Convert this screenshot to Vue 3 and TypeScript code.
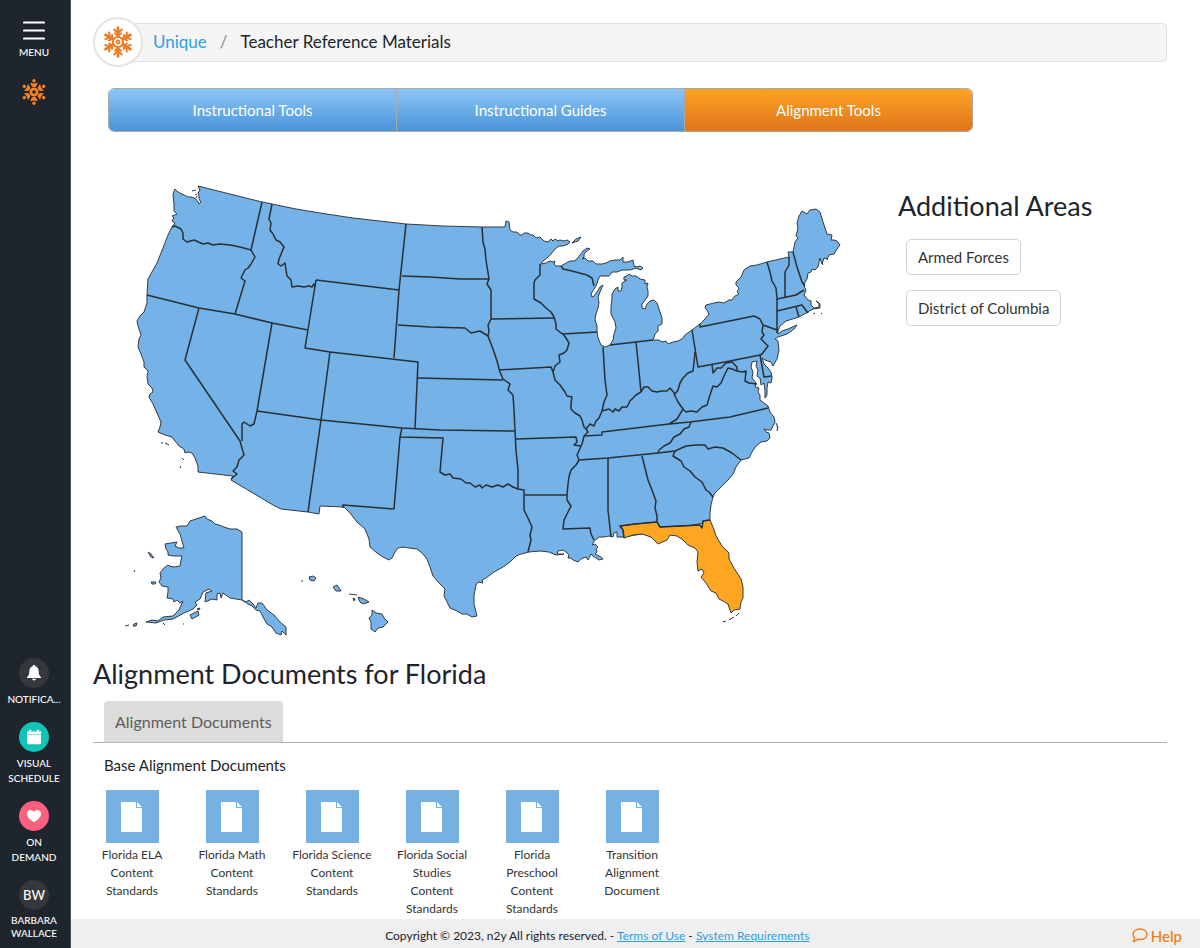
<script setup lang="ts">
import { ref } from 'vue'

interface Doc {
  id: number
  title: string
}

const tabs: string[] = ['Instructional Tools', 'Instructional Guides', 'Alignment Tools']
const activeTab = ref('Alignment Tools')
const areas: string[] = ['Armed Forces', 'District of Columbia']

const documents: Doc[] = [
  { id: 1, title: 'Florida ELA Content Standards' },
  { id: 2, title: 'Florida Math Content Standards' },
  { id: 3, title: 'Florida Science Content Standards' },
  { id: 4, title: 'Florida Social Studies Content Standards' },
  { id: 5, title: 'Florida Preschool Content Standards' },
  { id: 6, title: 'Transition Alignment Document' },
]

const arms: number[] = [0, 60, 120, 180, 240, 300]

// Lower 48 states as one landmass; state lines are drawn over it.
const mainland =
  'M175 189 178 192 182 194 188 197 192 197 196 199 198 202 199 204 201 202 199 199 199 196 198 193 200 190 198 186 230 194 262 202 272 204 296 209 320 213 353 218 406 224 443 226 482 227 505 227 506 221 509 222 510 230 513 232 517 232 520 235 522 235 524 233 528 233 531 235 533 235 536 238 540 237 544 241 548 242 551 239 553 241 555 239 558 241 560 240 564 241 567 240 570 242 568 244 563 246 559 246 555 249 551 254 547 258 543 261 541 264 546 263 550 261 553 262 555 261 554 264 556 266 561 266 566 263 570 261 574 261 577 259 580 255 583 251 587 248 590 249 587 251 584 254 584 257 582 259 585 258 588 261 593 261 596 264 602 264 606 263 610 261 615 260 620 260 623 257 623 262 628 262 633 260 634 266 637 267 640 266 643 268 641 270 636 268 630 270 622 270 617 272 612 272 609 276 605 276 600 276 598 280 596 286 592 292 591 296 593 297 597 292 600 287 603 285 600 292 598 297 599 303 598 308 596 314 595 320 597 326 597 332 598 338 601 345 605 347 610 345 613 340 614 334 616 328 615 322 611 314 611 307 612 298 612 294 615 289 618 287 618 291 621 291 622 287 622 283 625 281 627 280 624 280 624 277 627 276 629 274 632 276 636 276 640 279 645 280 645 284 648 283 647 287 648 291 648 296 645 300 642 304 642 308 645 309 647 304 650 301 654 300 657 303 659 309 662 318 662 324 658 326 658 331 655 334 653 340 659 340 662 342 666 341 668 344 673 342 678 341 682 339 685 335 692 330 700 324 705 319 709 314 707 310 705 308 706 305 714 303 719 302 724 303 729 300 732 300 735 296 739 294 737 292 739 288 736 285 736 282 741 277 744 270 750 266 757 265 767 262 789 257 788 252 793 252 795 242 798 238 796 236 798 228 797 223 799 216 802 211 807 214 810 210 816 209 820 212 823 222 827 234 832 235 831 240 834 240 837 241 840 245 837 249 834 254 829 255 827 259 824 258 822 264 820 258 818 267 815 270 812 269 811 272 808 273 807 279 805 282 804 286 806 290 804 295 808 300 811 301 811 305 814 308 819 307 819 303 816 301 820 304 820 308 813 309 808 312 799 317 786 321 780 326 778 331 778 334 782 331 788 329 797 325 794 329 787 334 778 337 775 339 778 341 779 350 777 359 773 366 771 362 765 360 762 358 764 364 768 368 771 372 772 378 771 383 768 382 767 388 767 395 765 398 765 390 764 383 761 385 760 378 757 376 758 370 756 366 757 361 752 362 751 367 753 372 752 378 756 383 755 387 759 388 758 392 760 395 760 400 764 403 768 406 770 412 774 417 775 422 771 430 767 430 764 429 766 432 769 433 770 438 767 441 761 442 756 446 752 452 749 458 741 460 736 467 733 474 728 480 720 488 715 493 713 497 711 505 710 513 710 522 624 537 617 537 617 532 614 533 613 537 609 536 604 537 599 537 594 541 592 545 595 544 598 547 596 549 597 552 595 554 601 557 603 559 599 560 593 556 591 554 588 560 586 557 581 559 578 562 573 560 571 558 568 558 569 555 566 552 563 550 558 551 557 554 564 554 556 555 549 552 540 551 529 552 521 554 516 556 510 562 503 567 494 572 486 578 482 580 483 583 478 582 476 585 474 595 474 604 477 616 472 617 467 614 462 614 457 611 450 608 447 602 444 596 445 589 439 583 433 576 430 567 427 559 422 553 417 549 409 548 403 547 398 548 395 552 392 558 389 560 383 557 377 553 370 547 369 539 365 529 357 522 350 513 344 507 320 506 319 514 308 512 281 509 273 505 231 480 233 476 198 472 198 466 195 458 192 453 188 452 185 453 184 449 179 446 175 441 172 437 165 435 158 432 160 427 161 422 157 413 153 404 149 397 150 394 153 392 152 388 148 384 147 377 148 371 144 367 144 362 141 354 138 347 139 339 141 335 138 326 137 321 140 316 144 312 147 303 147 295 148 279 157 263 163 248 168 235 172 227 175 223 172 221 174 218 172 216 177 214 174 211 174 204 173 194Z'

const florida =
  'M620 526 635 524 657 522 660 527 680 526 700 525 702 528 703 521 710 520 713 527 716 536 722 546 729 553 729 559 734 568 741 579 743 587 743 598 741 602 740 609 734 610 731 613 728 604 723 601 719 599 716 593 711 591 706 583 701 577 704 573 702 569 698 571 697 562 698 552 695 548 688 545 683 540 677 536 670 535 667 540 658 544 651 537 642 534 633 535 624 538 623 530Z'

const stateLines: string[] = [
  'M172 227 175 226 181 229 183 233 183 239 187 242 194 240 203 244 208 243 213 245 220 244 230 245 240 247 251 250',
  'M262 202 251 250 255 257 251 264 248 268 245 270 241 278 245 281 235 314',
  'M147 295 199 308 235 314 272 323 308 330',
  'M272 204 269 219 271 223 270 230 273 234 276 240 280 242 284 247 279 259 278 264 281 266 285 263 287 276 291 280 292 287 298 286 304 287 309 286 312 287 314 284 315 287',
  'M316 280 399 290 394 358 M316 280 305 348 330 352 418 362 415 428',
  'M406 224 399 290',
  'M402 276 430 277 460 279 489 279',
  'M482 227 483 242 485 249 486 260 489 279 487 284 491 290 491 319 488 325 489 331 488 336 493 349 497 361 500 372 503 379',
  'M398 325 430 327 465 328 471 333 480 331 488 336',
  'M491 319 554 318',
  'M540 264 540 275 535 280 534 283 534 299 541 303 546 308 551 312 554 317 556 324 556 329 561 333 563 334 566 338 569 343 567 350 564 353 559 355 560 362 555 366 553 372 555 380 560 385 565 392 567 396 572 397 571 403 571 409 575 413 580 416 582 420 584 427 586 429',
  'M563 334 597 332',
  'M561 266 563 269 572 271 587 275 592 278 594 286',
  'M499 370 551 367 553 372',
  'M603 347 605 380 607 395 604 402 602 411 599 418 596 421 594 426 590 424 586 429 588 432 584 436 582 444 577 455 579 460',
  'M602 411 609 409 613 412 615 409 619 411 622 407 627 407 630 401 636 395 641 392 M636 342 638 361 641 392 M610 345 636 342 653 340',
  'M641 392 644 387 648 387 652 391 657 392 662 391 667 391 670 388 675 394 678 390 680 383 683 378 688 373 693 371 694 363 695 352',
  'M692 330 698 367 725 362 760 355 764 377 772 376',
  'M700 324 700 327 754 316 760 319 763 325 762 332 764 335 761 339 768 346 765 350 762 354 760 355 M763 325 777 330',
  'M712 364 713 373 717 368 721 368 726 363 732 362 737 367 737 371 742 372 746 371 745 381 749 383 757 384',
  'M737 371 732 369 728 368 724 376 721 383 717 387 713 386 710 395 707 405 702 407 697 412 691 411 686 412 683 409 678 402 674 394',
  'M683 409 677 419 669 424',
  'M584 436 602 435 602 432 669 424 690 422 730 417 768 408',
  'M691 422 689 427 684 429 680 434 674 437 670 443 664 446 659 450 658 453',
  'M579 460 608 458 658 453 675 451 686 446 696 445 705 445 708 449 715 447 723 448 732 453 741 460',
  'M675 451 673 456 681 461 684 467 690 471 695 477 702 482 706 490 709 492 713 497',
  'M642 456 648 480 652 490 656 501 655 508 657 516 657 523',
  'M608 458 608 510 611 537',
  'M579 460 576 465 571 470 569 477 568 484 567 495 567 500 571 506 568 512 564 520 563 529 590 528 591 534 594 540',
  'M525 495 567 495',
  'M402 428 400 437 443 438 440 472 445 475 450 474 453 478 461 479 466 483 470 483 475 487 480 485 482 488 486 485 492 487 498 485 503 487 508 484 513 487 518 489 524 490 524 510 528 518 532 527 530 535 531 540 528 552',
  'M503 379 510 384 508 390 513 395 514 410 515 431 516 450 518 470 518 489',
  'M418 378 503 380 M257 411 321 420 402 428 440 430 515 431',
  'M516 439 576 437 577 442 574 445 581 446',
  'M330 352 321 420 308 512',
  'M272 323 257 411 254 424 250 426 244 422 242 424 242 441',
  'M199 308 185 360 240 441 244 455 239 460 237 467 233 471 237 474 231 479',
  'M400 437 394 509 343 505 343 508',
  'M767 262 770 272 772 281 776 288 777 298 777 315 777 333',
  'M789 257 789 265 785 272 785 284 785 297 M793 252 797 267 802 282 805 286',
  'M777 299 796 295 804 290 M777 311 802 305 808 313 M796 307 799 317',
]

const alaska =
  'M242 532 237 529 230 529 224 527 219 525 215 524 212 521 207 519 205 516 199 518 193 520 190 521 187 526 181 526 176 527 180 534 182 541 184 548 179 548 175 546 177 542 171 543 165 544 166 549 168 552 168 555 174 556 182 556 181 560 180 566 174 567 169 566 168 565 164 568 160 573 161 578 159 582 162 586 168 587 168 592 167 598 173 599 174 602 177 600 180 603 183 601 179 610 173 616 163 617 158 621 152 620 146 622 156 623 164 620 173 619 184 613 193 609 197 605 195 602 200 599 203 592 209 589 212 591 206 593 205 602 212 599 217 600 217 594 220 593 221 598 223 593 230 598 236 599 242 600Z'
const panhandle =
  'M242 600 246 602 249 600 253 604 256 608 258 603 262 603 267 610 274 615 280 622 286 627 286 635 282 631 281 635 276 633 272 627 267 624 263 617 260 611 256 610 252 606 248 604Z'
const islands: string[] = [
  'M190 615 198 611 199 615 192 619Z',
  'M197 609 200 608 199 610Z',
  'M148 552 151 554 153 557 154 558 151 557Z',
  'M151 582 156 582 155 584 152 584Z',
  'M134 624 137 623 136 626 133 626Z',
  'M125 626 129 625 M163 623 165 625 M134 570 135 572 M183 624 184 624',
  'M309 577 313 576 316 578 314 581 310 580Z',
  'M301 581 303 581 M349 594 357 595',
  'M333 587 337 585 341 591 336 591Z',
  'M353 598 355 599 354 601Z',
  'M358 597 364 599 369 602 363 604 360 602Z',
  'M372 610 376 613 382 614 384 618 388 622 383 627 378 628 375 632 371 629 371 622 369 618 372 615Z',
  'M572 243 576 239 581 237 578 241Z',
  'M161 443 163 443 M165 443 169 445 M182 458 184 460 M180 466 181 468',
  'M192 191 196 190 M195 194 197 195 M196 198 197 196',
  'M822 262 823 265 M826 258 828 260 M813 314 815 313 M821 313 822 314',
  'M776 423 778 427 777 431',
  'M723 622 726 621 M729 620 734 617 M736 616 739 613',
]
</script>

<template>
  <div class="app">
    <nav class="rail" aria-label="Main">
      <div class="rail-top">
        <button class="rail-item menu" type="button">
          <svg width="22" height="20" viewBox="0 0 22 20" aria-hidden="true">
            <path d="M1 2.500H21M1 10.500H21M1 18.500H21" stroke="#fff" stroke-width="2.200" stroke-linecap="round" />
          </svg>
          <span>MENU</span>
        </button>
        <button class="rail-item" type="button" aria-label="Unique">
          <svg width="24" height="26" viewBox="-12 -13 24 26" aria-hidden="true">
            <circle r="3.200" fill="none" stroke="#f58220" stroke-width="2.800" />
            <g v-for="a in arms" :key="a" :transform="`rotate(${a})`" fill="#f58220">
              <path d="M-3.800 -9.200 L0 -8.400 L3.800 -9.200 L2.200 -5.600 L0 -4.800 L-2.200 -5.600Z" />
              <circle cy="-11.200" r="1.700" />
            </g>
          </svg>
        </button>
      </div>
      <div class="rail-bottom">
        <button class="rail-item" type="button">
          <span class="badge dark">
            <svg width="16" height="18" viewBox="0 0 16 18" aria-hidden="true">
              <path d="M8 1C9 1 9.4 1.6 9.4 2.3C11.7 3 12.7 5 12.7 7.5C12.7 10.5 13.4 11.6 15 13.2V14H1V13.2C2.6 11.6 3.3 10.5 3.3 7.5C3.3 5 4.3 3 6.6 2.3C6.6 1.6 7 1 8 1ZM6 14.8H10C9.8 16 9 16.5 8 16.5S6.2 16 6 14.8Z" fill="#fff" />
            </svg>
          </span>
          <span>NOTIFICA...</span>
        </button>
        <button class="rail-item" type="button">
          <span class="badge teal">
            <svg width="16" height="16" viewBox="0 0 16 16" aria-hidden="true">
              <path d="M1 2.5H15V5H1ZM3.2 .8H5.2V3H3.2ZM10.8 .8H12.8V3H10.8ZM1 5.5H15V14Q15 15.3 13.7 15.3H2.3Q1 15.3 1 14Z" fill="#fff" />
            </svg>
          </span>
          <span>VISUAL SCHEDULE</span>
        </button>
        <button class="rail-item" type="button">
          <span class="badge pink">
            <svg width="16" height="14" viewBox="0 0 16 14" aria-hidden="true">
              <path d="M8 13.2C5.5 11.8 1 8.8 1 4.8C1 2.2 2.7 1 4.5 1C6 1 7.3 1.8 8 3C8.7 1.8 10 1 11.5 1C13.3 1 15 2.2 15 4.8C15 8.8 10.5 11.8 8 13.2Z" fill="#fff" />
            </svg>
          </span>
          <span class="narrow">ON DEMAND</span>
        </button>
        <button class="rail-item user" type="button">
          <span class="badge dark">BW</span>
          <span>BARBARA WALLACE</span>
        </button>
      </div>
    </nav>

    <div class="page">
      <main class="content">
        <nav class="crumbs" aria-label="Breadcrumb">
          <span class="crumb-logo">
            <svg width="32" height="34" viewBox="-16 -17 32 34" aria-hidden="true">
              <g fill="none" stroke="#ec7c22" stroke-linecap="round">
                <circle r="5" stroke-width="2.2" />
                <circle r="1.6" stroke-width="1.6" />
                <g v-for="a in arms" :key="a" :transform="`rotate(${a})`">
                  <path d="M0 -6V-14.5" stroke-width="2.6" />
                  <path d="M-3.8 -12.4L0 -9.4L3.8 -12.4M-3 -8.6L0 -6.4L3 -8.6" stroke-width="2" />
                </g>
              </g>
            </svg>
          </span>
          <div class="crumb-bar">
            <a href="#">Unique</a>
            <span class="slash">/</span>
            <span>Teacher Reference Materials</span>
          </div>
        </nav>

        <div class="tabs">
          <button
            v-for="t in tabs"
            :key="t"
            type="button"
            :class="{ active: t === activeTab }"
            @click="activeTab = t"
          >
            {{ t }}
          </button>
        </div>

        <section class="map-row">
          <svg class="map" viewBox="93 170 780 470" role="img" aria-label="Map of the United States, Florida selected">
            <path :d="mainland" class="land" />
            <path :d="alaska" class="land" />
            <path :d="panhandle" class="land" />
            <path v-for="(d, i) in islands" :key="`i${i}`" :d="d" class="land" />
            <path v-for="(d, i) in stateLines" :key="`s${i}`" :d="d" class="line" />
            <path :d="florida" class="land selected" />
            <path d="M624 538 623 530 620 526 635 524 657 522 660 527 680 526 700 525 702 528 703 521 710 520" class="line" />
          </svg>
          <aside class="areas">
            <h2>Additional Areas</h2>
            <button v-for="a in areas" :key="a" type="button">{{ a }}</button>
          </aside>
        </section>

        <section class="alignment">
          <h2>Alignment Documents for Florida</h2>
          <div class="doc-tabs">
            <button type="button">Alignment Documents</button>
          </div>
          <h3>Base Alignment Documents</h3>
          <ul class="docs">
            <li v-for="d in documents" :key="d.id">
              <a href="#">
                <span class="doc-icon">
                  <svg width="22" height="30" viewBox="0 0 22 30" aria-hidden="true">
                    <path d="M0 0H15V6H21V30H0Z" fill="#fff" />
                    <path d="M16 0L21 5H16Z" fill="#fff" />
                  </svg>
                </span>
                <span>{{ d.title }}</span>
              </a>
            </li>
          </ul>
        </section>
      </main>

      <footer class="footer">
        <p>
          Copyright © 2023, n2y All rights reserved. - <a href="#">Terms of Use</a> -
          <a href="#">System Requirements</a>
        </p>
        <button class="help" type="button">
          <svg width="16" height="15" viewBox="0 0 16 15" aria-hidden="true">
            <path d="M8 1C12 1 15 3.2 15 6.3S12 11.6 8 11.6C7.2 11.6 6.4 11.5 5.7 11.3C4.5 12.5 3 13.4 1.2 13.6C2.1 12.6 2.6 11.4 2.7 10C1.6 9 1 7.7 1 6.3C1 3.2 4 1 8 1Z" fill="none" stroke="#f0811f" stroke-width="1.5" stroke-linejoin="round" />
          </svg>
          Help
        </button>
      </footer>
    </div>
  </div>
</template>

<style>
body {
  margin: 0;
  background: #fff;
}
</style>

<style scoped>
.app {
  display: flex;
  min-height: 100vh;
  font-family: Lato, "Liberation Sans", sans-serif;
  font-size: 16px;
  color: #1d242c;
}
button {
  font: inherit;
  color: inherit;
  padding: 0;
  border: 0;
  background: none;
  cursor: pointer;
}
h2,
h3,
p {
  margin: 0;
  font-weight: 400;
}
h2 {
  font-size: 27px;
  line-height: 36px;
}
a {
  color: #2d9fe3;
}

.rail {
  flex: none;
  box-sizing: border-box;
  width: 71px;
  padding: 20px 2px 8px 0;
  display: flex;
  flex-direction: column;
  justify-content: space-between;
  background: #1e252d;
  border-right: 1px solid #4b5057;
  color: #fff;
}
.rail-top,
.rail-bottom {
  display: flex;
  flex-direction: column;
  align-items: stretch;
}
.rail-top {
  gap: 19px;
}
.rail-bottom {
  gap: 15px;
}
.rail-item {
  display: flex;
  flex-direction: column;
  align-items: center;
  gap: 4px;
  font-size: 10px;
  font-weight: 500;
  line-height: 15px;
  text-align: center;
}
.rail-item.menu {
  gap: 5px;
}
.rail-item .narrow {
  width: 50px;
}
.rail-item.user {
  line-height: 13px;
}
.rail-item.user span + span {
  width: 56px;
}
.badge {
  display: flex;
  align-items: center;
  justify-content: center;
  width: 30px;
  height: 30px;
  border-radius: 50%;
  font-size: 13px;
}
.dark {
  background: #34383c;
}
.teal {
  background: #12c4b8;
}
.pink {
  background: #fb607f;
}

.page {
  flex: 1;
  min-width: 0;
  display: flex;
  flex-direction: column;
}
.content {
  flex: 1;
  padding: 17px 33px 0 22px;
}
.crumbs {
  display: flex;
  align-items: center;
}
.crumb-logo {
  z-index: 1;
  box-sizing: border-box;
  width: 50px;
  height: 50px;
  margin-right: -26px;
  display: flex;
  align-items: center;
  justify-content: center;
  background: #fff;
  border: 2px solid #e4e4e4;
  border-radius: 50%;
}
.crumb-bar {
  flex: 1;
  box-sizing: border-box;
  height: 39px;
  padding: 0 0 2px 35px;
  display: flex;
  align-items: center;
  gap: 13px;
  background: #f5f5f5;
  border: 1px solid #e0e0e0;
  border-radius: 4px;
  font-size: 17px;
}
.crumb-bar a {
  text-decoration: none;
}
.slash {
  color: #8c8c8c;
}

.tabs {
  display: flex;
  box-sizing: border-box;
  max-width: 865px;
  height: 44px;
  margin: 21px 0 0 15px;
  border: 1px solid #a9a9a9;
  border-radius: 6px;
  overflow: hidden;
}
.tabs button {
  flex: 1;
  font-size: 15px;
  color: #fff;
  background: linear-gradient(#8cc6f7, #4a93d8);
}
.tabs button + button {
  border-left: 1px solid #a9a9a9;
}
.tabs .active {
  background: linear-gradient(#fca326, #e0751a);
}

.map-row {
  display: grid;
  grid-template-columns: 780fr 294fr;
  padding-top: 38px;
}
.map {
  display: block;
  width: 100%;
}
.land {
  fill: #74b2e8;
  stroke: #333b42;
  stroke-width: 1;
  stroke-linejoin: round;
}
.selected {
  fill: #fea621;
}
.line {
  fill: none;
  stroke: #282f35;
  stroke-width: 1.5;
  stroke-linejoin: round;
}
.areas {
  display: flex;
  flex-direction: column;
  align-items: flex-start;
  gap: 15px;
  padding: 18px 0 0 25px;
}
.areas button {
  box-sizing: border-box;
  height: 36px;
  margin-left: 8px;
  padding: 0 11px;
  background: #fff;
  border: 1px solid #d4d4d4;
  border-radius: 5px;
  font-size: 15px;
  color: #333;
}

.alignment {
  padding-top: 16px;
}
.doc-tabs {
  display: flex;
  margin-top: 9px;
  padding-left: 11px;
  border-bottom: 1px solid #b4b4b4;
}
.doc-tabs button {
  height: 41px;
  padding: 0 11px;
  background: #dcdcdc;
  border-radius: 4px 4px 0 0;
  font-size: 16px;
  color: #5c5c5c;
}
h3 {
  margin: 12px 0 0 11px;
  font-size: 15px;
  line-height: 20px;
}
.docs {
  display: flex;
  flex-wrap: wrap;
  gap: 20px;
  margin: 15px 0 0 -1px;
  padding: 0;
  list-style: none;
}
.docs li {
  width: 80px;
}
.docs a {
  display: flex;
  flex-direction: column;
  align-items: center;
  gap: 3px;
  font-size: 12px;
  line-height: 18px;
  text-align: center;
  text-decoration: none;
  color: #333;
}
.doc-icon {
  display: flex;
  align-items: center;
  justify-content: center;
  width: 53px;
  height: 53px;
  background: #77b1e1;
}

.footer {
  display: flex;
  align-items: center;
  height: 29px;
  padding: 4px 18px 0 22px;
  box-sizing: border-box;
  background: #eeefee;
  font-size: 12px;
}
.footer p {
  flex: 1;
  padding-right: 30px;
  text-align: center;
}
.help {
  display: flex;
  align-items: center;
  gap: 3px;
  font-size: 15px;
  font-weight: 600;
  color: #f0811f;
}
</style>
